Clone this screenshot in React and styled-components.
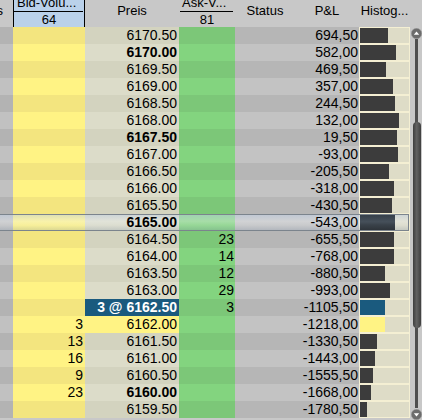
import React from "react";
import styled, { createGlobalStyle, css } from "styled-components";

const GlobalStyle = createGlobalStyle`
  html, body { margin: 0; padding: 0; overflow: hidden; background: #c8c8c8; }
  body { font-family: "Liberation Sans", Arial, sans-serif; color: #000; }
`;

const COLS = "13px 72px 94px 56px 60px 64px 51px";

const Frame = styled.div`
  display: flex;
  width: 422px;
  height: 420px;
  overflow: hidden;
  background: #c8c8c8;
`;

const Grid = styled.div`
  width: 410px;
  display: flex;
  flex-direction: column;
`;

const HeaderRow = styled.div`
  display: grid;
  grid-template-columns: ${COLS};
  height: 27px;
  background: #c8c8c8;
  flex: none;
`;

const HeaderCell = styled.div`
  font-size: 13px;
  line-height: 14px;
  padding-top: 4px;
  white-space: nowrap;
  overflow: hidden;
  display: flex;
  justify-content: ${(p) => (p.$edge ? "flex-end" : "center")};
  padding-right: ${(p) => (p.$edge ? "10px" : "0")};
`;

const StackedHeader = styled.div`
  display: flex;
  flex-direction: column;
  overflow: hidden;
  box-sizing: border-box;
  font-size: 13px;
  ${(p) =>
    p.$active &&
    css`
      background: #bad1ea;
      border-left: 1px solid #000;
      border-right: 1px solid #000;
    `}
`;

const TopLabel = styled.div`
  line-height: 13px;
  margin-top: -4px;
  padding: 0 3px;
  white-space: nowrap;
  overflow: hidden;
`;

const Divider = styled.div`
  height: 1px;
  background: #000;
  margin: 2px ${(p) => (p.$active ? "1px" : "2px")} 0 ${(p) => (p.$active ? "0" : "1px")};
`;

const BottomLabel = styled.div`
  line-height: 14px;
  margin-top: 1px;
  text-align: center;
`;

const Row = styled.div`
  display: grid;
  grid-template-columns: ${COLS};
  height: 17px;
  position: relative;
  flex: none;
  ${(p) =>
    p.$selected &&
    css`
      &::after {
        content: "";
        position: absolute;
        z-index: 1;
        left: -1px;
        top: 0;
        width: 410px;
        height: 17px;
        box-sizing: border-box;
        border: 1px solid #7b848d;
        background: linear-gradient(
          180deg,
          rgba(190, 206, 228, 0.5) 0%,
          rgba(236, 240, 246, 0.34) 42%,
          rgba(220, 226, 234, 0.22) 68%,
          rgba(140, 156, 178, 0.3) 100%
        );
        pointer-events: none;
      }
    `}
`;

const palette = {
  side: ["#b3b3b3", "#c1c1c1"],
  bid: ["#f3e57f", "#fff384"],
  price: ["#d3d3bf", "#dcdcc9"],
  ask: ["#7cc778", "#83d47f"],
  gray: ["#b6b6b6", "#c3c3c3"],
};

const Cell = styled.div`
  font-size: 14px;
  line-height: 16px;
  height: 17px;
  text-align: right;
  white-space: nowrap;
  overflow: hidden;
  padding-right: ${(p) => p.$pad ?? 2}px;
  background: ${(p) => palette[p.$kind][p.$odd ? 1 : 0]};
  font-weight: ${(p) => (p.$bold ? 700 : 400)};
  ${(p) =>
    p.$variant === "blue" &&
    css`
      background: #1a5a7e;
      color: #fff;
      font-weight: 700;
    `}
  ${(p) =>
    p.$variant === "yellow" &&
    css`
      background: #fff384;
    `}
`;

const CellText = styled.span`
  position: relative;
  z-index: 2;
`;

const HistCell = styled.div`
  background: #f4efd3;
  padding: 1px;
  height: 17px;
  box-sizing: border-box;
`;

const HistTrack = styled.div`
  height: 15px;
  background: #dedcc7;
  display: flex;
`;

const Bar = styled.div`
  height: 100%;
  background: ${(p) =>
    p.$variant === "blue" ? "#1a5a7e" : p.$variant === "yellow" ? "#fff384" : "#3c3c3c"};
  ${(p) =>
    p.$selected &&
    css`
      position: relative;
      z-index: 2;
      background: linear-gradient(180deg, #36404a 0%, #46505a 45%, #3a424a 65%, #2e343a 100%);
    `}
`;

const ScrollBar = styled.div`
  width: 12px;
  flex: none;
  display: flex;
  flex-direction: column;
  padding-top: 28px;
  box-sizing: border-box;
  height: 420px;
`;

const ArrowButton = styled.div`
  width: 11px;
  height: ${(p) => (p.$down ? 12 : 11)}px;
  margin-left: 1px;
  flex: none;
  display: flex;
  align-items: center;
  justify-content: center;
`;

const Track = styled.div`
  flex: 1;
  position: relative;
  &::before {
    content: "";
    position: absolute;
    left: 5px;
    top: 0;
    bottom: 0;
    width: 3px;
    background: #4f4f4f;
  }
`;

const Thumb = styled.div`
  position: absolute;
  left: 3px;
  top: 83px;
  width: 8px;
  height: 206px;
  border-radius: 4px;
  background: linear-gradient(90deg, #3e3e3e 0%, #626262 45%, #5a5a5a 60%, #3e3e3e 100%);
`;

function ArrowIcon({ down }) {
  return (
    <svg width="11" height="11" viewBox="0 0 11 11">
      <circle cx="5.5" cy="5.5" r="5.2" fill="#6c6c6c" stroke="#9a9a9a" strokeWidth="0.6" />
      {down ? (
        <polygon points="2.8,4.2 8.2,4.2 5.5,7.4" fill="#fff" />
      ) : (
        <polygon points="2.8,6.8 8.2,6.8 5.5,3.6" fill="#fff" />
      )}
    </svg>
  );
}

const PNL = [
  "694,50", "582,00", "469,50", "357,00", "244,50", "132,00", "19,50", "-93,00",
  "-205,50", "-318,00", "-430,50", "-543,00", "-655,50", "-768,00", "-880,50", "-993,00",
  "-1105,50", "-1218,00", "-1330,50", "-1443,00", "-1555,50", "-1668,00", "-1780,50",
];
const BARS = [28, 36, 26, 33, 35, 39, 37, 38, 29, 34, 32, 35, 34, 34, 25, 30, 25, 25, 17, 15, 13, 11, 7];
const ASK = { 12: 23, 13: 14, 14: 12, 15: 29, 16: 3 };
const BID = { 17: 3, 18: 13, 19: 16, 20: 9, 21: 23 };
const SELECTED = 11;

const ROWS = Array.from({ length: 23 }, (_, i) => {
  const price = 6170.5 - i * 0.5;
  const variant = i === 16 ? "blue" : i === 17 ? "yellow" : undefined;
  return {
    price,
    label: i === 16 ? `3 @ ${price.toFixed(2)}` : price.toFixed(2),
    bold: Math.round(price * 2) % 5 === 0,
    pnl: PNL[i],
    bar: BARS[i],
    ask: ASK[i],
    bid: BID[i],
    variant,
  };
});

export default function App() {
  return (
    <>
      <GlobalStyle />
      <Frame>
        <Grid>
          <HeaderRow>
            <HeaderCell $edge>Orders</HeaderCell>
            <StackedHeader $active>
              <TopLabel>Bid-Volu...</TopLabel>
              <Divider $active />
              <BottomLabel>64</BottomLabel>
            </StackedHeader>
            <HeaderCell>Preis</HeaderCell>
            <StackedHeader>
              <TopLabel>Ask-V...</TopLabel>
              <Divider />
              <BottomLabel>81</BottomLabel>
            </StackedHeader>
            <HeaderCell>Status</HeaderCell>
            <HeaderCell>P&amp;L</HeaderCell>
            <HeaderCell>Histog...</HeaderCell>
          </HeaderRow>
          {ROWS.map((r, i) => {
            const odd = i % 2 === 1;
            const selected = i === SELECTED;
            return (
              <Row key={i} $selected={selected}>
                <Cell $kind="side" $odd={odd} />
                <Cell $kind="bid" $odd={odd}>
                  {r.bid != null && <CellText>{r.bid}</CellText>}
                </Cell>
                <Cell $kind="price" $odd={odd} $bold={r.bold} $variant={r.variant}>
                  <CellText>{r.label}</CellText>
                </Cell>
                <Cell $kind="ask" $odd={odd} $pad={1}>
                  {r.ask != null && <CellText>{r.ask}</CellText>}
                </Cell>
                <Cell $kind="gray" $odd={odd} />
                <Cell $kind="gray" $odd={odd} $pad={1}>
                  <CellText>{r.pnl}</CellText>
                </Cell>
                <HistCell>
                  <HistTrack>
                    <Bar
                      $variant={r.variant}
                      $selected={selected}
                      style={{ width: `${r.bar}px` }}
                    />
                  </HistTrack>
                </HistCell>
              </Row>
            );
          })}
        </Grid>
        <ScrollBar>
          <ArrowButton>
            <ArrowIcon />
          </ArrowButton>
          <Track>
            <Thumb />
          </Track>
          <ArrowButton $down>
            <ArrowIcon down />
          </ArrowButton>
        </ScrollBar>
      </Frame>
    </>
  );
}
